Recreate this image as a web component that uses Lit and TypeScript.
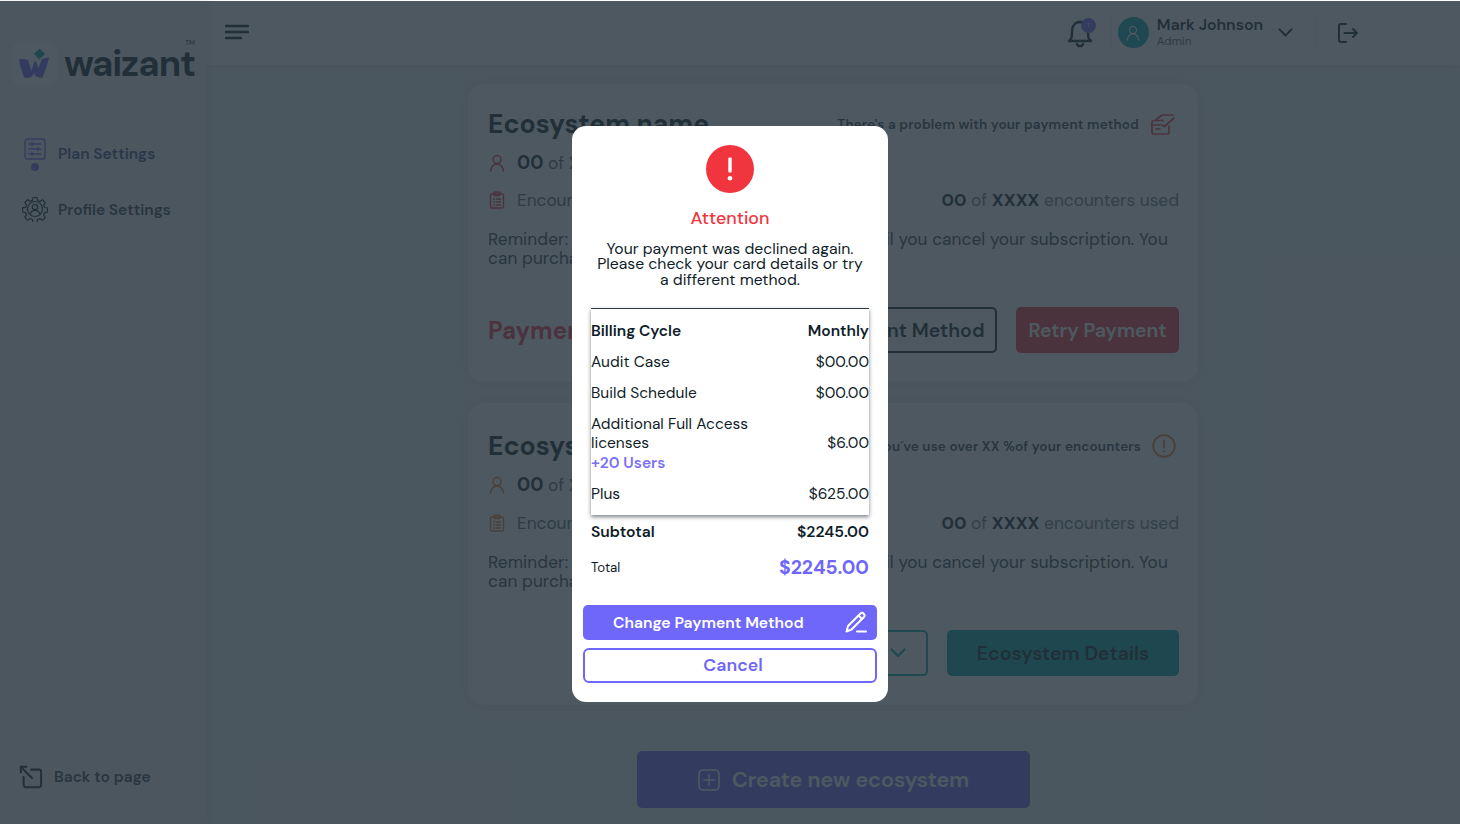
import { LitElement, html, css, svg } from "lit";
import { customElement, property } from "lit/decorators.js";

const userIcon = (color: string) => svg`<svg width="18" height="18" viewBox="0 0 18 18" fill="none" stroke=${color} stroke-width="1.5" stroke-linecap="round"><circle cx="9" cy="5.6" r="4"/><path d="M2.6 17c.6-4.4 3-7 6.4-7s5.800 2.600 6.400 7"/></svg>`;

const clipboardIcon = (color: string) => svg`<svg width="18" height="18" viewBox="0 0 18 18" fill="none" stroke=${color} stroke-width="1.4" stroke-linecap="round"><rect x="2.500" y="3" width="13" height="14" rx="1.500"/><rect x="6" y="1" width="6" height="3.500" rx="1"/><path d="M5.500 8h1M8.500 8h4M5.500 11h1M8.500 11h4M5.500 14h1M8.500 14h4"/></svg>`;

const cardIcon = svg`<svg width="26" height="22" viewBox="0 0 26 22" fill="none" stroke="#f0353f" stroke-width="1.700" stroke-linecap="round" stroke-linejoin="round"><path d="M19 13v6a2 2 0 0 1-2 2H4a2 2 0 0 1-2-2V9.500a2 2 0 0 1 2-2h9"/><path d="M6 7l5-4.500c.6-.4 1-.5 2-.5h10"/><path d="M12 12l2.500 1.500L24 5"/><path d="M2 12h8M6 16h4"/></svg>`;

const warnIcon = svg`<svg width="24" height="24" viewBox="0 0 24 24" fill="none" stroke="#f07a2a" stroke-width="1.8" stroke-linecap="round"><circle cx="12" cy="12" r="10.800"/><path d="M12 6.500v7M12 17v.4"/></svg>`;

const chevron = (color: string, w = 16) => svg`<svg width=${w} height=${w * 0.62} viewBox="0 0 16 10" fill="none" stroke=${color} stroke-width="2.200" stroke-linecap="round" stroke-linejoin="round"><path d="M1.500 1.500 8 8l6.500-6.500"/></svg>`;

@customElement("eco-card")
export class EcoCard extends LitElement {
  @property() titulo = "";
  @property() aviso = "";
  @property() kind = "payment";

  render() {
    const accent = this.kind === "payment" ? "#f0353f" : "#f07a2a";
    return html`
      <section class=${this.kind}>
        <div class="row head">
          <h2>${this.titulo}</h2>
          <div class="notice">
            <span>${this.aviso}</span>
            ${this.kind === "payment" ? cardIcon : warnIcon}
          </div>
        </div>
        <div class="stat users">
          ${userIcon(accent)}
          <span><b>00</b> of XXXX users</span>
        </div>
        <div class="row enc">
          <div class="stat">
            ${clipboardIcon(accent)}
            <span>Encounters</span>
          </div>
          <span class="used"><b>00</b> of <b>XXXX</b> encounters used</span>
        </div>
        <p class="reminder">
          Reminder: your plan will continue each month until you cancel your subscription. You<br />
          can purchase additional encounters at any time.
        </p>
        ${this.kind === "payment"
          ? html`<div class="row actions">
              <span class="failed">Payment failed</span>
              <div class="btns">
                <button class="ghost dark">Change Payment Method</button>
                <button class="retry">Retry Payment</button>
              </div>
            </div>`
          : html`<div class="row actions end">
              <div class="btns">
                <button class="ghost teal">Upgrade Plan ${chevron("#00a6a6", 16)}</button>
                <button class="details">Ecosystem Details</button>
              </div>
            </div>`}
      </section>
    `;
  }

  static styles = css`
    :host {
      display: block;
      font-family: "DM Sans", Inter, sans-serif;
      color: #101d29;
    }

    section {
      box-sizing: border-box;
      inline-size: 730px;
      padding: 20px 19px 0 20px;
      background: #fff;
      border-radius: 16px;
      box-shadow: 0 0 14px rgba(30, 50, 70, 0.1);
    }

    section.payment {
      block-size: 298px;
    }

    section.usage {
      block-size: 302px;
      padding-block-start: 23px;
    }

    .row {
      display: flex;
      justify-content: space-between;
      align-items: center;
    }

    h2 {
      margin: 0;
      font-size: 26.500px;
      line-height: 40px;
      font-weight: 700;
    }

    .notice {
      display: flex;
      align-items: center;
      gap: 11px;
      padding-inline-end: 3px;
      font-size: 13.500px;
      letter-spacing: 0.15px;
      font-weight: 600;
      color: #33414e;
    }

    .stat {
      display: flex;
      align-items: center;
      gap: 11px;
      font-size: 17.200px;
      line-height: 24px;
      color: #54616c;
    }

    .stat b {
      font-size: 18.800px;
      font-weight: 700;
      color: #101d29;
    }

    .users {
      margin-block-start: 7px;
    }

    .enc {
      margin-block-start: 13px;
    }

    .usage .enc {
      margin-block-start: 14px;
    }

    .used {
      font-size: 17.300px;
      line-height: 24px;
      color: #6c7883;
    }

    .used b {
      font-size: 17.800px;
      font-weight: 700;
      color: #101d29;
    }

    .reminder {
      margin: 18px 0 0;
      font-size: 17.200px;
      letter-spacing: 0.1px;
      line-height: 19px;
      color: #33414e;
    }

    .actions {
      margin-block-start: 39px;
    }

    .actions.end {
      justify-content: flex-end;
    }

    .failed {
      font-size: 24px;
      font-weight: 700;
      color: #f0353f;
    }

    .btns {
      display: flex;
      gap: 19px;
    }

    button {
      box-sizing: border-box;
      block-size: 46px;
      padding: 0;
      border-radius: 5px;
      border: 2px solid transparent;
      background: none;
      font: 600 19.500px "DM Sans", Inter, sans-serif;
      display: flex;
      align-items: center;
      justify-content: center;
      gap: 12px;
    }

    .ghost.dark {
      inline-size: 270px;
      padding-inline-start: 8px;
      border-color: #101d29;
      color: #101d29;
    }

    .ghost.teal {
      inline-size: 200px;
      border-color: #00a6a6;
      color: #00a6a6;
      justify-content: flex-end;
      padding-inline-end: 20px;
    }

    .retry {
      inline-size: 163px;
      background: #f0353f;
      color: #fff;
    }

    .details {
      inline-size: 232px;
      background: #00a0a6;
      color: #101d29;
    }
  `;
}

@customElement("pay-modal")
export class PayModal extends LitElement {
  render() {
    return html`
      <div class="modal">
        <svg class="alert" width="48" height="48" viewBox="0 0 48 48">
          <circle cx="24" cy="24" r="24" fill="#f0353f" />
          <rect x="22.300" y="12.500" width="3.400" height="15" rx="1" fill="#fff" />
          <circle cx="24" cy="33.200" r="2.300" fill="#fff" />
        </svg>
        <h3>Attention</h3>
        <p class="msg">
          Your payment was declined again.<br />
          Please check your card details or try<br />
          a different method.
        </p>
        <div class="bill">
          <div class="line strong"><span>Billing Cycle</span><span>Monthly</span></div>
          <div class="line"><span>Audit Case</span><span>$00.00</span></div>
          <div class="line"><span>Build Schedule</span><span>$00.00</span></div>
          <div class="line multi">
            <span>Additional Full Access<br />licenses<br /><em>+20 Users</em></span>
            <span>$6.00</span>
          </div>
          <div class="line"><span>Plus</span><span>$625.00</span></div>
        </div>
        <div class="sum sub"><span>Subtotal</span><span>$2245.00</span></div>
        <div class="sum total"><span>Total</span><b>$2245.00</b></div>
        <button class="primary">
          <span>Change Payment Method</span>
          <svg width="24" height="22" viewBox="0 0 24 22" fill="none" stroke="#fff" stroke-width="2" stroke-linecap="round" stroke-linejoin="round">
            <path d="M1.500 20.500 3 15 15.500 2.500a2.500 2.500 0 0 1 3.500 3.500L6.500 18.500z" />
            <path d="M13.500 4.500l3.500 3.500" />
            <path d="M12 20.500h9" />
          </svg>
        </button>
        <button class="cancel">Cancel</button>
      </div>
    `;
  }

  static styles = css`
    :host {
      display: block;
      font-family: "DM Sans", Inter, sans-serif;
      color: #101d29;
    }

    .modal {
      box-sizing: border-box;
      inline-size: 316px;
      block-size: 576px;
      padding: 19px 11px 0;
      background: #fff;
      border-radius: 14px;
      display: flex;
      flex-flow: column;
      align-items: center;
    }

    .alert {
      flex: none;
    }

    h3 {
      margin: 14px 0 0;
      font-size: 17.800px;
      line-height: 22px;
      font-weight: 500;
      color: #f0353f;
    }

    .msg {
      margin: 11.500px 0 0;
      font-size: 15.750px;
      line-height: 15.500px;
      text-align: center;
      white-space: nowrap;
    }

    .bill {
      box-sizing: border-box;
      inline-size: 278px;
      block-size: 207px;
      margin-block-start: 20.500px;
      border-block-start: 1px solid #2b3a46;
      padding-block-start: 13px;
      box-shadow: 0 2px 4px rgba(16, 29, 41, 0.55);
      display: flex;
      flex-flow: column;
      gap: 11.500px;
      font-size: 15.500px;
      line-height: 19.500px;
    }

    .line {
      display: flex;
      justify-content: space-between;
      align-items: center;
    }

    .strong {
      font-weight: 600;
    }

    em {
      font-style: normal;
      font-weight: 600;
      color: #7b6ff5;
    }

    .sum {
      inline-size: 278px;
      display: flex;
      justify-content: space-between;
      align-items: center;
    }

    .sub {
      margin-block-start: 7px;
      font-size: 15.700px;
      line-height: 20px;
      font-weight: 600;
    }

    .total {
      margin-block-start: 12px;
      font-size: 13.300px;
      line-height: 28px;
    }

    .total b {
      font-size: 19.400px;
      font-weight: 700;
      color: #6f67fa;
    }

    button {
      box-sizing: border-box;
      inline-size: 294px;
      block-size: 35px;
      border-radius: 5px;
      font: 600 15.700px "DM Sans", Inter, sans-serif;
    }

    .primary {
      margin-block-start: 23px;
      border: 0;
      background: #6f67fa;
      color: #fff;
      display: flex;
      align-items: center;
      justify-content: space-between;
      padding: 0 8px 0 30px;
    }

    .cancel {
      margin-block-start: 8px;
      padding: 0 0 1px 6px;
      border: 2px solid #6f67fa;
      border-radius: 6px;
      background: #fff;
      color: #6f67fa;
      font-size: 17.700px;
    }
  `;
}

@customElement("app-root")
export class AppRoot extends LitElement {
  render() {
    return html`
      <div class="page">
        <aside>
          <div class="logo">
            <svg width="46" height="46" viewBox="0 0 46 46">
              <rect width="46" height="46" rx="11" fill="#fff" />
              <path d="M7 18.500c3-.7 6-.5 9 .5l3.500 11 3-10 2 1 2 6 3.500-9c2-.8 4.500-1.300 7-1.500-1.500 7-4 14-6.500 20-2.500.5-4.500 0-6.500-1l-2-3-2.500 3.500c-2.500 1-5 1-7.500.5-2-5.500-4-11-5-18z" fill="#6f67fa" />
              <path d="M27.500 7.500l5.500 5.500-5.500 5.500-5.500-5.500z" fill="#0fa39a" />
            </svg>
            <span class="word">waizant<sup>TM</sup></span>
          </div>
          <nav>
            <a class="item active">
              <span class="ico">
                <svg width="22" height="22" viewBox="0 0 22 22" fill="none" stroke="#6f67fa" stroke-width="1.400" stroke-linecap="round">
                  <rect x="1" y="1" width="20" height="20" rx="2.500" />
                  <path d="M5 6h12M5 11h12M5 16h12" />
                  <path d="M8 4.500v3M14 9.500v3M8 14.500v3" />
                </svg>
                <i class="dot"></i>
              </span>
              <span class="lbl">Plan Settings</span>
            </a>
            <a class="item">
              <span class="ico">
                <svg width="26" height="26" viewBox="0 0 26 26" fill="none" stroke="#101d29" stroke-width="1.200" stroke-linecap="round" stroke-linejoin="round">
                  <path d="M11 1.500h4l.6 3 2.400 1 2.600-1.700 2.700 2.800-1.700 2.500 1 2.400 3 .5v4l-3 .6-1 2.400 1.700 2.600-2.800 2.700-2.500-1.700-2.400 1-.6 2.900h-4l-.5-3-2.400-1-2.600 1.700-2.700-2.800 1.700-2.500-1-2.400-3-.6v-4l3-.5 1-2.400-1.700-2.600 2.800-2.700 2.500 1.700 2.400-1z" />
                  <circle cx="13" cy="13" r="7.500" />
                  <circle cx="13" cy="11" r="2.700" />
                  <path d="M8.300 18c.7-2.400 2.500-3.600 4.700-3.600s4 1.200 4.700 3.600" />
                </svg>
              </span>
              <span class="lbl">Profile Settings</span>
            </a>
          </nav>
          <a class="back">
            <svg width="24" height="24" viewBox="0 0 26 26" fill="none" stroke="#101d29" stroke-width="2.200" stroke-linecap="round" stroke-linejoin="round">
              <path d="M13 5h8.500A2.500 2.500 0 0 1 24 7.500v14a2.500 2.500 0 0 1-2.500 2.500h-14A2.500 2.500 0 0 1 5 21.500V13" />
              <path d="M2 2l12 12M2 8V2h6" />
            </svg>
            Back to page
          </a>
        </aside>
        <div class="main">
          <header>
            <svg class="burger" width="24" height="16" viewBox="0 0 24 16" fill="none" stroke="#101d29" stroke-width="2.400" stroke-linecap="round">
              <path d="M1 2h22M1 8h22M1 14h15" />
            </svg>
            <div class="tools">
              <span class="bell">
                <svg width="26" height="30" viewBox="0 0 26 30" fill="none" stroke="#101d29" stroke-width="2.400" stroke-linecap="round" stroke-linejoin="round">
                  <path d="M2 23c2.500-2 3-3.500 3-9 0-6 3-10 8-10s8 4 8 10c0 5.500.5 7 3 9z" />
                  <path d="M10 26a3.200 3.200 0 0 0 6 0" />
                </svg>
                <i>1</i>
              </span>
              <span class="sep"></span>
              <span class="avatar">
                <svg width="16" height="18" viewBox="0 0 18 18" fill="none" stroke="#fff" stroke-width="1.300" stroke-linecap="round">
                  <circle cx="9" cy="5.600" r="4" />
                  <path d="M2.600 17c.6-4.400 3-7 6.400-7s5.800 2.600 6.400 7" />
                </svg>
              </span>
              <span class="who"><b>Mark Johnson</b><small>Admin</small></span>
              ${chevron("#101d29", 15)}
              <span class="sep two"></span>
              <svg width="20" height="20" viewBox="0 0 20 20" fill="none" stroke="#101d29" stroke-width="2" stroke-linecap="round" stroke-linejoin="round">
                <path d="M8 1H3a2 2 0 0 0-2 2v14a2 2 0 0 0 2 2h5" />
                <path d="M6.500 10H19M15 6l4 4-4 4" />
              </svg>
            </div>
          </header>
          <div class="content">
            <eco-card
              kind="payment"
              titulo="Ecosystem name"
              aviso="There's a problem with your payment method"
            ></eco-card>
            <eco-card
              kind="usage"
              titulo="Ecosystem name"
              aviso="You´ve use over XX %of your encounters"
            ></eco-card>
            <button class="create">
              <svg width="22" height="22" viewBox="0 0 22 22" fill="none" stroke="#fff" stroke-width="1.600" stroke-linecap="round">
                <rect x="1" y="1" width="20" height="20" rx="4" />
                <path d="M11 6v10M6 11h10" />
              </svg>
              Create new ecosystem
            </button>
          </div>
        </div>
        <div class="overlay"><pay-modal></pay-modal></div>
      </div>
    `;
  }

  static styles = css`
    :host {
      display: block;
      font-family: "DM Sans", Inter, sans-serif;
      color: #101d29;
    }

    .page {
      position: relative;
      display: flex;
      block-size: 824px;
      overflow: hidden;
      background: #f4f6f8;
    }

    aside {
      box-sizing: border-box;
      flex: none;
      inline-size: 207px;
      padding: 41px 0 35px 12px;
      background: #f3f4f6;
      box-shadow: 2px 0 8px rgba(30, 50, 70, 0.08);
      display: flex;
      flex-flow: column;
      z-index: 1;
    }

    .logo {
      display: flex;
      align-items: center;
      gap: 6px;
      block-size: 46px;
    }

    .word {
      font-size: 36.500px;
      font-weight: 700;
      letter-spacing: -1px;
      line-height: 46px;
      color: #101d29;
      position: relative;
    }

    sup {
      position: absolute;
      inset-block-start: -2px;
      inset-inline-end: 0;
      font-size: 7px;
      font-weight: 400;
      letter-spacing: 0;
      line-height: 8px;
    }

    nav {
      display: flex;
      flex-flow: column;
      gap: 25px;
      margin-block-start: 51px;
      padding-inline-start: 10px;
    }

    .item {
      display: flex;
      align-items: flex-start;
      gap: 10px;
      font-size: 15.500px;
      line-height: 26px;
      font-weight: 600;
      color: #33414e;
    }

    .lbl {
      padding-block-start: 1px;
    }

    .item.active {
      color: #3f4a8a;
    }

    .item.active .lbl {
      padding-block-start: 3px;
    }

    .ico {
      inline-size: 26px;
      display: flex;
      flex-flow: column;
      align-items: center;
      gap: 3px;
    }

    .dot {
      inline-size: 8px;
      block-size: 8px;
      border-radius: 50%;
      background: #6f67fa;
    }

    .back {
      margin-block-start: auto;
      padding-inline-start: 7px;
      display: flex;
      align-items: center;
      gap: 11px;
      font-size: 15.500px;
      font-weight: 600;
      color: #33414e;
    }

    .main {
      flex: 1;
      min-inline-size: 0;
    }

    header {
      box-sizing: border-box;
      block-size: 65px;
      padding-inline: 18px 102px;
      background: #fff;
      box-shadow: 0 2px 6px rgba(30, 50, 70, 0.08);
      display: flex;
      align-items: center;
      justify-content: space-between;
    }

    .burger {
      margin-block-end: 1px;
    }

    .tools {
      display: flex;
      align-items: center;
    }

    .bell {
      position: relative;
      display: flex;
    }

    .bell i {
      position: absolute;
      inset-block-start: 0;
      inset-inline-end: -3px;
      inline-size: 15px;
      block-size: 15px;
      border-radius: 50%;
      background: #6f67fa;
      font: 400 6px/15px "DM Sans", Inter, sans-serif;
      text-align: center;
      color: #fff;
    }

    .sep {
      inline-size: 1px;
      block-size: 33px;
      margin-inline: 17px 7px;
      background: #e8ecef;
    }

    .sep.two {
      margin-inline: 23px 21px;
    }

    .avatar {
      inline-size: 31px;
      block-size: 31px;
      border-radius: 50%;
      background: #00a6b4;
      display: flex;
      align-items: center;
      justify-content: center;
    }

    .who {
      display: flex;
      flex-flow: column;
      margin-block-end: 2px;
      margin-inline: 8px 15px;
    }

    .who b {
      font-size: 15.800px;
      line-height: 18px;
      font-weight: 600;
    }

    .who small {
      font-size: 11.600px;
      line-height: 14px;
      color: #54616c;
    }

    .content {
      padding-block-start: 19px;
      padding-inline-start: 261px;
      display: flex;
      flex-flow: column;
      align-items: flex-start;
      gap: 21px;
    }

    .create {
      box-sizing: border-box;
      inline-size: 393px;
      block-size: 57px;
      margin-block-start: 25px;
      margin-inline-start: 169px;
      border: 0;
      border-radius: 5px;
      background: #6f67fa;
      color: #fff;
      font: 600 21.500px "DM Sans", Inter, sans-serif;
      display: flex;
      align-items: center;
      justify-content: center;
      gap: 12px;
    }

    .overlay {
      position: absolute;
      inset: 1px 0 0;
      z-index: 2;
      background: rgba(38, 51, 61, 0.82);
      display: flex;
      justify-content: center;
      align-items: flex-start;
      padding-block-start: 125px;
    }
  `;
}
